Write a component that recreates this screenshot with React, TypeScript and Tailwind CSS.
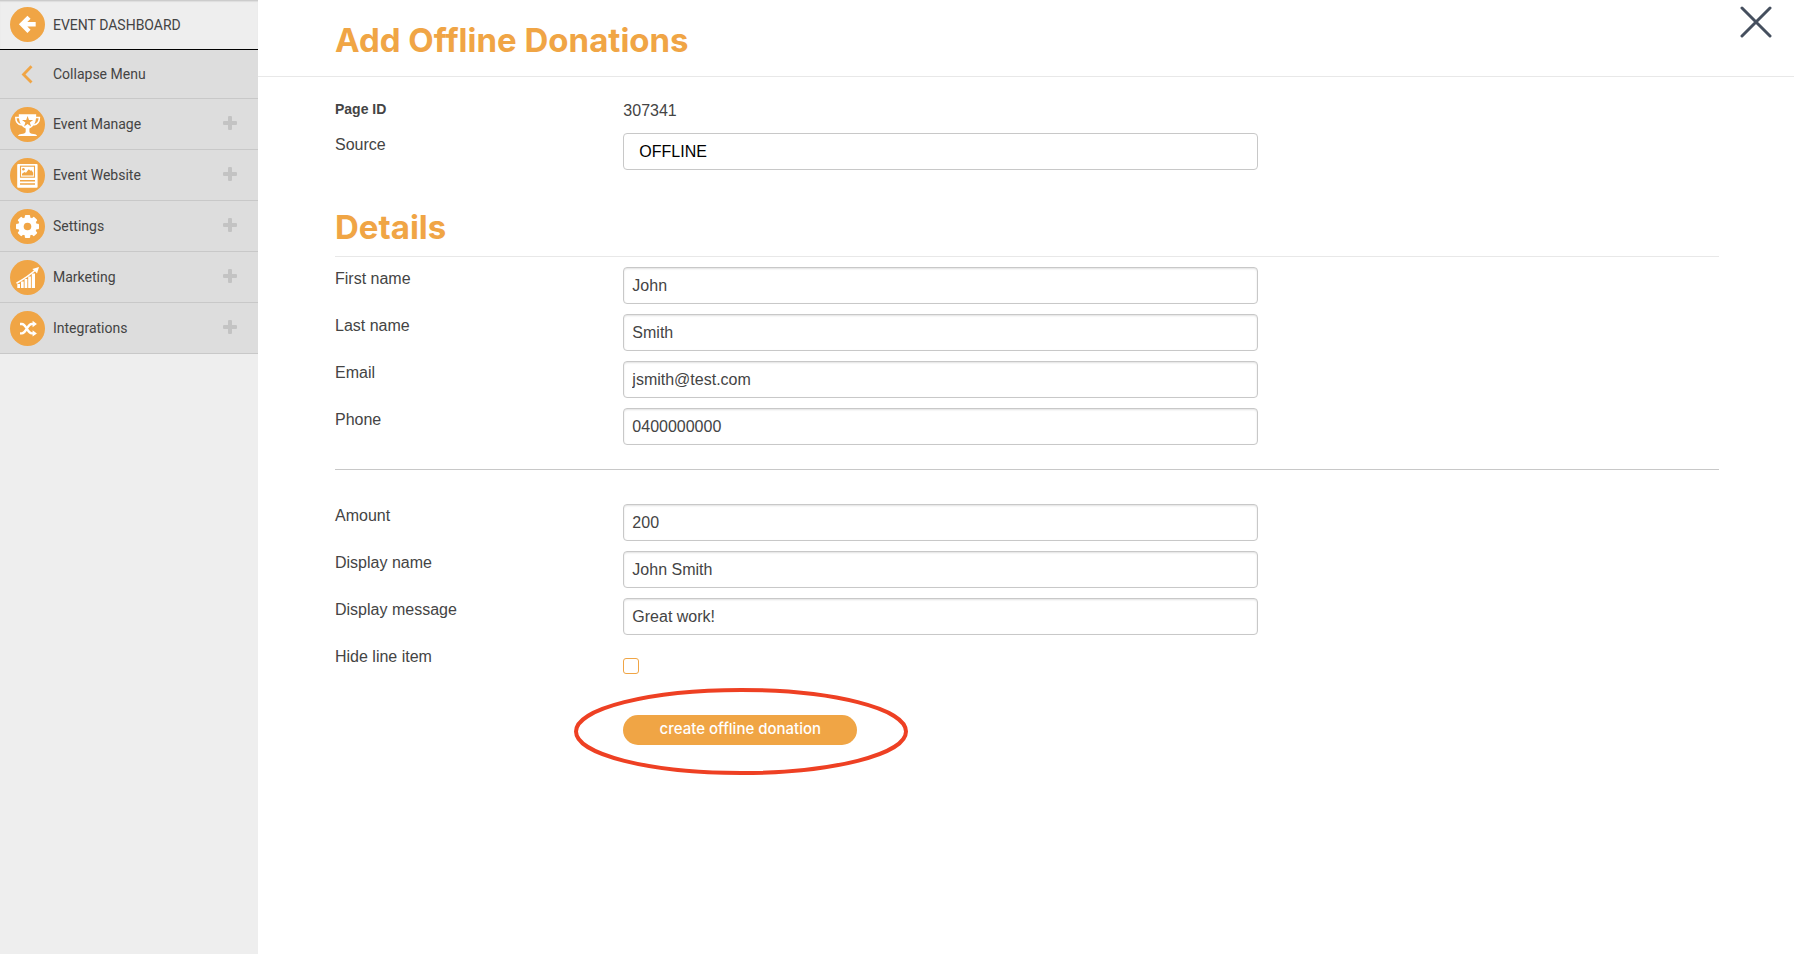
import type { ReactNode } from "react";

type Field = {
  id: string;
  label: string;
  value: string;
  type?: string;
};

const personFields: Field[] = [
  { id: "first-name", label: "First name", value: "John" },
  { id: "last-name", label: "Last name", value: "Smith" },
  { id: "email", label: "Email", value: "jsmith@test.com", type: "email" },
  { id: "phone", label: "Phone", value: "0400000000", type: "tel" },
];

const donationFields: Field[] = [
  { id: "amount", label: "Amount", value: "200" },
  { id: "display-name", label: "Display name", value: "John Smith" },
  { id: "display-message", label: "Display message", value: "Great work!" },
];

/* Round orange badge that carries a white glyph */
function Badge({ children }: { children: ReactNode }) {
  return (
    <svg viewBox="0 0 35 35" className="w-[35px] h-[35px] shrink-0" fill="#fff" aria-hidden="true">
      <circle cx="17.5" cy="17.5" r="17.5" fill="#f0a545" />
      {children}
    </svg>
  );
}

function ArrowIcon() {
  return (
    <Badge>
      <path d="M19 10.2 12 17.3l7 7.1M12.5 17.3h13.2" fill="none" stroke="#fff" strokeWidth="4.4" />
    </Badge>
  );
}

function TrophyIcon() {
  return (
    <Badge>
      <path d="M8.8 7.2h17.4c0 7-1.4 11.8-6.8 14.2v3c0 1.5 1.5 2.2 4.4 2.6 1.5.2 3 .8 3.300 2H8c.3-1.2 1.8-1.8 3.300-2 2.9-.4 4.4-1.100 4.400-2.600v-3C10.300 19 8.800 14.200 8.800 7.200Z" />
      <path
        d="M10 10.600H5.800c0 4.200 2 7 6 7.400M25.200 10.600h4.200c0 4.200-2 7-6 7.400"
        fill="none"
        stroke="#fff"
        strokeWidth="1.500"
      />
      <path
        fill="#f0a545"
        d="m17.600 9 1.400 3.900h4.200l-3.400 2.500 1.300 4.100-3.500-2.500-3.500 2.500 1.300-4.100-3.400-2.500h4.200Z"
      />
    </Badge>
  );
}

function WebsiteIcon() {
  return (
    <Badge>
      <rect x="7.2" y="6" width="20.4" height="23.7" rx="1" />
      <rect x="10.5" y="8.2" width="14" height="11" fill="none" stroke="#f0a545" strokeWidth="1.1" />
      <circle cx="13.4" cy="11.2" r="1.3" fill="#f0a545" />
      <path fill="#f0a545" d="M12 17.6v-1.8l2.500-1.800 1.500.8 2.700-3.600 1.800 1.600 1-.6 1.700 2.600v2.800Z" />
      <path d="M10 22.700h15M10 26h15" stroke="#f0a545" strokeWidth="1.600" />
    </Badge>
  );
}

function GearIcon() {
  return (
    <Badge>
      <circle cx="17.5" cy="17.5" r="9.4" />
      {[0, 45, 90, 135].map((angle) => (
        <rect
          key={angle}
          x="14.8"
          y="6"
          width="5.4"
          height="23"
          rx="1"
          transform={`rotate(${angle} 17.5 17.5)`}
        />
      ))}
      <circle cx="17.5" cy="17.5" r="3.8" fill="#f0a545" />
    </Badge>
  );
}

function ChartIcon() {
  return (
    <Badge>
      <path d="M7.3 24H10v4H7.300ZM11 21.500h2.700V28H11ZM14.600 19h2.700v9h-2.700ZM18.200 16.500h2.700V28h-2.700ZM21.800 13.500H25V28h-3.200Z" />
      <path d="M6.500 23.300C13 19.500 20 15 26 9.500" fill="none" stroke="#fff" strokeWidth="1.600" />
      <path d="m29 7-2 6.400-1.800-1.900-2.900-2.600Z" />
    </Badge>
  );
}

function ShuffleIcon() {
  return (
    <Badge>
      <path
        d="M10 13h1.800c4.600 0 5.400 9.400 10 9.400h1.700M10 22.400h1.800c4.600 0 5.400-9.400 10-9.400h1.700"
        fill="none"
        stroke="#fff"
        strokeWidth="2.4"
      />
      <path d="m22.600 9.800 4.300 3.200-4.300 3.200ZM22.600 19.200l4.300 3.200-4.300 3.200Z" />
    </Badge>
  );
}

function PlusIcon() {
  return (
    <svg viewBox="0 0 14 14" className="ml-auto mb-[2px] w-[14px] h-[14px]" fill="#c3c3c3" aria-hidden="true">
      <rect x="5" width="4" height="14" rx="1" />
      <rect y="5" width="14" height="4" rx="1" />
    </svg>
  );
}

const menu = [
  { label: "Event Manage", icon: <TrophyIcon /> },
  { label: "Event Website", icon: <WebsiteIcon /> },
  { label: "Settings", icon: <GearIcon /> },
  { label: "Marketing", icon: <ChartIcon /> },
  { label: "Integrations", icon: <ShuffleIcon /> },
];

function Sidebar() {
  return (
    <aside className="w-[258px] shrink-0 bg-[#eee] font-[Roboto,sans-serif] text-sm text-[#444]">
      <a
        href="#dashboard"
        className="flex h-[50px] items-center gap-2 border-t border-b border-t-[#ccc] border-b-black pb-px pl-[10px] shadow-[inset_0_1px_1px_#ddd]"
      >
        <ArrowIcon />
        EVENT DASHBOARD
      </a>
      <nav className="bg-[#ddd]">
        <button
          type="button"
          className="flex h-[49px] w-full items-center gap-2 border-b border-[#c8c8c8] pb-px pl-[10px]"
        >
          <svg viewBox="0 0 35 35" className="w-[35px] h-[35px]" fill="none" aria-hidden="true">
            <path d="m21.5 10.2-8 8.200 8 8.200" stroke="#f0a545" strokeWidth="2.8" />
          </svg>
          Collapse Menu
        </button>
        {menu.map((item) => (
          <button
            key={item.label}
            type="button"
            className="flex h-[51px] w-full items-center gap-2 border-b border-[#c8c8c8] pl-[10px] pr-[21px]"
          >
            {item.icon}
            {item.label}
            <PlusIcon />
          </button>
        ))}
      </nav>
    </aside>
  );
}

function Row({ id, label, children }: { id: string; label: string; children: ReactNode }) {
  return (
    <div className="grid grid-cols-[5fr_11fr_8fr] items-start">
      <label htmlFor={id} className="leading-6">
        {label}
      </label>
      {children}
    </div>
  );
}

function TextRow({ id, label, value, type = "text" }: Field) {
  return (
    <Row id={id} label={label}>
      <input
        id={id}
        type={type}
        defaultValue={value}
        className="h-[37px] w-full rounded border border-[#c8c8c8] bg-white px-2 shadow-[inset_0_1px_2px_rgba(0,0,0,0.12)]"
      />
    </Row>
  );
}

export default function App() {
  return (
    <div className="flex min-h-screen bg-white">
      <Sidebar />
      <main className="min-w-0 flex-1 font-['Liberation_Sans',Arial,sans-serif] text-base text-[#444]">
        <header className="flex items-start justify-between border-b border-[#e8e8e8] pt-5 pb-4 pl-[77px] pr-[22px]">
          <h1 className="font-[Inter,sans-serif] text-[33px] leading-10 font-bold text-[#f0a545]">
            Add Offline Donations
          </h1>
          <button type="button" aria-label="Close" className="-mt-[14px]">
            <svg viewBox="0 0 32 32" className="w-8 h-8" fill="none" stroke="#454f5e" aria-hidden="true">
              <path d="m2 2 28 28M30 2 2 30" strokeWidth="3" strokeLinecap="round" />
            </svg>
          </button>
        </header>

        <form className="pt-[22px] pb-10 pl-[77px] pr-[75px]" onSubmit={(e) => e.preventDefault()}>
          <div className="grid h-[34px] grid-cols-[5fr_11fr_8fr] items-start">
            <span className="text-sm leading-5 font-bold">Page ID</span>
            <span className="leading-6">307341</span>
          </div>
          <Row id="source" label="Source">
            <select
              id="source"
              className="h-[37px] w-full appearance-none rounded border border-[#c8c8c8] bg-white px-[15px] text-black"
            >
              <option>OFFLINE</option>
            </select>
          </Row>

          <h2 className="mt-[37px] mb-[10px] border-b border-[#e8e8e8] pb-[9px] font-[Inter,sans-serif] text-[33px] leading-10 font-bold text-[#f0a545]">
            Details
          </h2>
          <div className="flex flex-col gap-[10px]">
            {personFields.map((field) => (
              <TextRow key={field.id} {...field} />
            ))}
          </div>

          <hr className="mt-6 mb-[34px] border-[#c8c8c8]" />

          <div className="flex flex-col gap-[10px]">
            {donationFields.map((field) => (
              <TextRow key={field.id} {...field} />
            ))}
            <Row id="hide-line-item" label="Hide line item">
              <input
                id="hide-line-item"
                type="checkbox"
                className="mt-[13px] h-4 w-4 appearance-none rounded-[3px] border border-[#f0a545] checked:bg-[#f0a545]"
              />
            </Row>
          </div>

          <div className="mt-[41px] grid grid-cols-[5fr_11fr_8fr]">
            <div className="relative col-start-2 justify-self-start">
              <button
                type="submit"
                className="block h-[30px] w-[234px] rounded-full bg-[#f0a545] pb-px font-[Inter,sans-serif] text-[15px] font-medium text-white"
              >
                create offline donation
              </button>
              {/* Red ring that calls out the submit button */}
              <svg
                viewBox="0 0 334 87"
                className="pointer-events-none absolute -top-[27px] -left-[49px] h-[87px] w-[334px] max-w-none"
                fill="none"
                aria-hidden="true"
              >
                <ellipse cx="167" cy="43.5" rx="165" ry="41.5" stroke="#ee4023" strokeWidth="4" />
              </svg>
            </div>
          </div>
        </form>
      </main>
    </div>
  );
}
